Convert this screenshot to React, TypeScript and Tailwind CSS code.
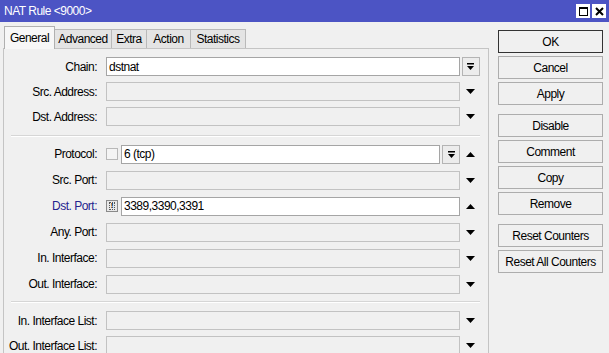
import React from 'react';

const FONT = { fontFamily: '"Liberation Sans", Arial, sans-serif' };

const TABS = [
  { name: 'General', w: 'w-[51px]', active: true },
  { name: 'Advanced', w: 'w-[57px]' },
  { name: 'Extra', w: 'w-[35px]' },
  { name: 'Action', w: 'w-[44px]' },
  { name: 'Statistics', w: 'w-[55px]' },
];

function Arrow({ up = false }: { up?: boolean }) {
  return (
    <svg width="9" height="5" viewBox="0 0 9 5">
      <path d={up ? 'M0 5 L4.5 0 L9 5 Z' : 'M0 0 L9 0 L4.5 5 Z'} fill="#000" />
    </svg>
  );
}

function DropButton() {
  return (
    <div className="flex h-[19px] w-[18px] shrink-0 items-center justify-center border border-[#b4b4b4] bg-[#ececec]">
      <svg width="7" height="7" viewBox="0 0 7 7">
        <rect x="0" y="0" width="7" height="1.5" fill="#000" />
        <path d="M0 3 L7 3 L3.5 7 Z" fill="#000" />
      </svg>
    </div>
  );
}

function Field({ value, filled }: { value?: string; filled?: boolean }) {
  return (
    <div
      className={
        'flex h-[19px] min-w-0 flex-1 items-center border pl-[2px] text-[12px] tracking-[-0.5px] ' +
        (filled ? 'border-[#a5a5a5] bg-white' : 'border-[#c2c2c2] bg-[#f0f0f0]')
      }
    >
      {value}
    </div>
  );
}

function Row({
  label,
  h,
  blue,
  children,
  trail,
}: {
  label: string;
  h: string;
  blue?: boolean;
  children: React.ReactNode;
  trail?: React.ReactNode;
}) {
  return (
    <div className={`flex items-center ${h}`}>
      <div className={`w-[93px] shrink-0 text-right text-[12px] tracking-[-0.5px] ${blue ? 'text-[#24248e]' : 'text-black'}`}>
        {label}
      </div>
      <div className="ml-[9px] flex w-[354px] items-center">{children}</div>
      <div className="ml-px flex w-[19px] items-center justify-center">{trail}</div>
    </div>
  );
}

function Separator() {
  return <div className="ml-[7px] mr-[8px] border-t border-[#d6d6d6] border-b border-b-white" />;
}

const BUTTONS: { label: string; mt?: string; def?: boolean }[] = [
  { label: 'OK', def: true },
  { label: 'Cancel' },
  { label: 'Apply' },
  { label: 'Disable', mt: 'mt-[6px]' },
  { label: 'Comment' },
  { label: 'Copy' },
  { label: 'Remove' },
  { label: 'Reset Counters', mt: 'mt-[6px]' },
  { label: 'Reset All Counters' },
];

export default function App() {
  return (
    <div className="h-[353px] w-[609px] overflow-hidden bg-[#f0f0f0] text-black" style={FONT}>
      {/* Title bar */}
      <div className="flex h-[22px] items-center justify-between bg-[#4c54c4] pl-[4px] pr-[3px]">
        <span className="text-[12px] tracking-[-0.5px] text-white">NAT Rule &lt;9000&gt;</span>
        <div className="flex gap-[2px]">
          <div className="flex h-[14px] w-[14px] items-center justify-center bg-white">
            <svg width="9" height="9" viewBox="0 0 9 9">
              <rect x="0.5" y="0.5" width="8" height="8" fill="none" stroke="#000" />
              <rect x="0" y="0" width="9" height="2" fill="#000" />
            </svg>
          </div>
          <div className="flex h-[14px] w-[14px] items-center justify-center bg-white">
            <svg width="9" height="9" viewBox="0 0 9 9">
              <path d="M1 1 L8 8 M8 1 L1 8" stroke="#000" strokeWidth="2" />
            </svg>
          </div>
        </div>
      </div>

      <div className="flex">
        {/* Left: tabs and form */}
        <div className="ml-[3px] w-[486px]">
          <div className="relative z-10 flex h-[26px] items-end pl-px">
            {TABS.map((t) =>
              t.active ? (
                <div
                  key={t.name}
                  className={`${t.w} -mb-px flex h-[23px] items-center justify-center border border-b-0 border-[#b0b0b0] bg-[#f7f7f7] text-[12px] tracking-[-0.5px]`}
                >
                  {t.name}
                </div>
              ) : (
                <div
                  key={t.name}
                  className={`${t.w} flex h-[19px] items-center justify-center border border-b-0 border-l-0 border-[#b9b9b9] bg-[#e4e4e4] text-[12px] tracking-[-0.5px]`}
                >
                  {t.name}
                </div>
              )
            )}
          </div>
          <div className="h-[320px] border border-[#c4c4c4] pt-[5px]">
            <Row label="Chain:" h="h-[25px]" trail={<DropButton />}>
              <Field value="dstnat" filled />
            </Row>
            <Row label="Src. Address:" h="h-[25px]" trail={<Arrow />}>
              <Field />
            </Row>
            <Row label="Dst. Address:" h="h-[25px]" trail={<Arrow />}>
              <Field />
            </Row>
            <div className="mt-[6px]">
              <Separator />
            </div>
            <div className="mt-[4px]">
              <Row label="Protocol:" h="h-[26px]" trail={<Arrow up />}>
                <div className="mr-[3px] h-[12px] w-[12px] shrink-0 border border-[#b8b8b8] bg-[#f4f4f4]" />
                <Field value="6 (tcp)" filled />
                <div className="ml-[2px]">
                  <DropButton />
                </div>
              </Row>
              <Row label="Src. Port:" h="h-[26px]" trail={<Arrow />}>
                <Field />
              </Row>
              <Row label="Dst. Port:" h="h-[26px]" blue trail={<Arrow up />}>
                <div className="mr-[3px] flex h-[12px] w-[12px] shrink-0 items-center justify-center border border-[#8a8a8a] bg-[#e8e8e8]">
                  <div className="flex h-[8px] w-[6px] items-center justify-center border border-dotted border-[#555] text-[8px] font-bold leading-none">
                    !
                  </div>
                </div>
                <Field value="3389,3390,3391" filled />
              </Row>
              <Row label="Any. Port:" h="h-[26px]" trail={<Arrow />}>
                <Field />
              </Row>
              <Row label="In. Interface:" h="h-[26px]" trail={<Arrow />}>
                <Field />
              </Row>
              <Row label="Out. Interface:" h="h-[26px]" trail={<Arrow />}>
                <Field />
              </Row>
            </div>
            <div className="mt-[4px]">
              <Separator />
            </div>
            <div className="mt-[5px]">
              <Row label="In. Interface List:" h="h-[25px]" trail={<Arrow />}>
                <Field />
              </Row>
              <Row label="Out. Interface List:" h="h-[25px]" trail={<Arrow />}>
                <Field />
              </Row>
            </div>
          </div>
        </div>

        {/* Right: buttons */}
        <div className="ml-[9px] flex w-[105px] flex-col gap-[3px] pt-[8px]">
          {BUTTONS.map((b) => (
            <div
              key={b.label}
              className={`${b.mt ?? ''} flex h-[23px] items-center justify-center border bg-[#f0f0f0] text-[12px] tracking-[-0.5px] ${
                b.def ? 'border-[#333]' : 'border-[#adadad]'
              }`}
            >
              {b.label}
            </div>
          ))}
        </div>
      </div>
    </div>
  );
}
